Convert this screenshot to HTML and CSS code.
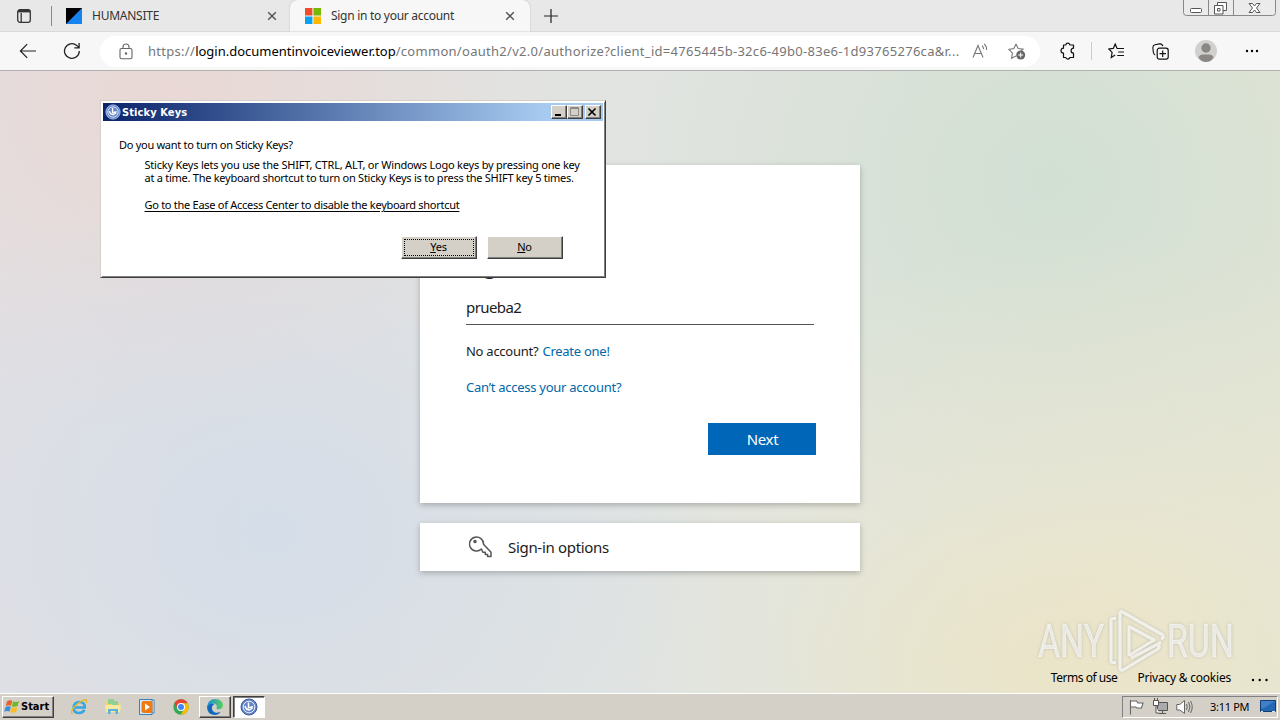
FILE: index.html
```html
<!DOCTYPE html>
<html lang="en">
<head>
<meta charset="utf-8">
<title>Desktop</title>
<link rel="stylesheet" href="styles.css">
</head>
<body>
<div class="desktop">
  <header class="tabstrip">
    <svg class="tab-actions" width="16" height="16" viewBox="0 0 16 16" fill="none" stroke="#333" stroke-width="1.3"><rect x="1.7" y="1.7" width="12.6" height="12.6" rx="2.2"/><path d="M2 3.2h12" stroke-width="2.4"/><path d="M5.2 5v9"/></svg>
    <span class="strip-rule"></span>
    <div class="tab">
      <svg width="16" height="16" viewBox="0 0 16 16"><path fill="#1683f0" d="M0 0h16v16H0z"/><path d="M0 0h16L0 16z"/></svg>
      <span class="tab-title t-human">HUMANSITE</span>
      <svg class="tab-x" width="10" height="10" viewBox="0 0 10 10"><path d="M1.2 1.2l7.6 7.6M8.8 1.2L1.2 8.8"/></svg>
    </div>
    <div class="tab active">
      <svg width="16" height="16" viewBox="0 0 16 16"><path fill="#f04e2b" d="M0 0h7.4v7.4H0z"/><path fill="#76b900" d="M8.4 0H16v7.4H8.4z"/><path fill="#09a2ee" d="M0 8.4h7.4V16H0z"/><path fill="#ffb700" d="M8.4 8.4H16V16H8.4z"/></svg>
      <span class="tab-title t-sign">Sign in to your account</span>
      <svg class="tab-x" width="10" height="10" viewBox="0 0 10 10"><path d="M1.2 1.2l7.6 7.6M8.8 1.2L1.2 8.8"/></svg>
    </div>
    <svg class="new-tab" width="14" height="14" viewBox="0 0 14 14"><path d="M7 0v14M0 7h14" stroke="#222" stroke-width="1.2"/></svg>
    <svg class="win-controls" width="94" height="18" viewBox="0 0 94 18" fill="none" stroke="#888">
      <path fill="#ebebeb" d="M.5-1v14.500q0 3 3 3h86q3 0 3-3V-1"/><path d="M25.500 0v16M50.500 0v16"/>
      <g stroke="#555"><rect x="7.500" y="9.500" width="11" height="4" rx="1" fill="#fff"/><path fill="#fff" d="M34.500 3.500h9v8h-9z"/><path fill="#fff" d="M31.500 6.500h8.500v8.500h-8.500zM34.500 9.500h2.500v2.500h-2.500z"/><path fill="#fff" d="M66 4.500h3.500l2 2.500 2-2.500H77L73.500 9l3.500 4.500h-3.500l-2-2.500-2 2.500H66L69.500 9z"/></g>
    </svg>
  </header>

  <nav class="toolbar">
    <svg class="back" width="18" height="16" viewBox="0 0 18 16"><path d="M17 8H1.500M8.200 1.200L1.400 8l6.800 6.800" fill="none" stroke="#222" stroke-width="1.200"/></svg>
    <svg class="reload" width="18" height="18" viewBox="0 0 18 18"><path d="M16.300 9A7.400 7.400 0 1 1 13.700 3.400L16 5.600M16.100 1v4.800h-4.800" fill="none" stroke="#222" stroke-width="1.300"/></svg>
    <div class="address">
      <svg class="lock" width="14" height="17" viewBox="0 0 14 17" fill="none" stroke="#666" stroke-width="1.100"><rect x="1" y="5.500" width="12" height="10.300" rx="1.500"/><path d="M4 5.500V4a3 3 0 0 1 6 0v1.500"/><circle cx="7" cy="10.500" r=".7" fill="#666"/></svg>
      <span class="url">https://<b>login.documentinvoiceviewer.top</b>/common/oauth2/v2.0/authorize?client_id=4765445b-32c6-49b0-83e6-1d93765276ca&amp;r...</span>
      <svg class="read" width="17" height="16" viewBox="0 0 17 16" fill="none" stroke="#777" stroke-width="1.100"><path d="M1 14.500L6 2.500l5 12M2.700 10.500h6.600M10 2.800q1.700 1.200 1.600 3.500M12 1q3 2 2.500 6"/></svg>
      <svg class="fav" width="18" height="17" viewBox="0 0 18 17"><path d="M8 1l2.100 4.500 5 .7-3.600 3.500M8 12.900l-4.400 2.300.8-5L.9 6.400l5-.8L8 1" fill="none" stroke="#777" stroke-width="1.100"/><circle cx="12.700" cy="12" r="4.500" fill="#666"/><path d="M12.700 9.500v5M10.200 12h5" stroke="#fff"/></svg>
    </div>
    <svg class="ext" width="16" height="18" viewBox="0 0 16 18"><path d="M3.500 3h2.300q.3-1.900 2-1.900T9.900 3h3.600v3.200q-2.400.3-2.400 2.500t2.400 2.500v4.300H9.900q-.4 1.600-2.100 1.600t-2-1.600H3.500v-4.300Q1 10.900 1 8.700t2.500-2.500z" fill="none" stroke="#111" stroke-width="1.200" stroke-linejoin="round"/></svg>
    <span class="tool-rule"></span>
    <svg class="favs" width="17" height="16" viewBox="0 0 17 16"><path d="M9 5.500L7.200 1 5.300 5.400.8 6l3.300 3.400-.8 5.100L7.200 12M9 5.500h7M10.200 9H16M9.200 12.500H16" fill="none" stroke="#111" stroke-width="1.200"/></svg>
    <svg class="coll" width="17" height="17" viewBox="0 0 17 17"><path d="M3.200 12C1.500 11.500 1.400 10.200 1.200 8.500L.9 5Q.7 2.300 3 1.800L7.500.9Q10.200.6 10.800 3.200" fill="none" stroke="#111" stroke-width="1.100"/><rect x="5.200" y="5.200" width="11" height="11" rx="2.200" fill="#fafafa" stroke="#111" stroke-width="1.200"/><path d="M10.700 7.500v6.500M7.500 10.700H14" stroke="#111" stroke-width="1.200"/></svg>
    <svg class="avatar" width="22" height="22" viewBox="0 0 22 22"><circle cx="11" cy="11" r="11" fill="#d2d0ce"/><circle cx="11" cy="8" r="4.700" fill="#8a8683"/><path d="M3.500 17.500q1-3 4.500-3h6q3.500 0 4.500 3-3 4.500-7.500 4.500t-7.500-4.500" fill="#8a8683"/></svg>
    <svg class="more" width="14" height="4" viewBox="0 0 14 4"><circle cx="2" cy="2" r="1.200"/><circle cx="7" cy="2" r="1.200"/><circle cx="12" cy="2" r="1.200"/></svg>
  </nav>

  <main class="page">
    <section class="card signin">
      <h1>Sign in</h1>
      <div class="field"><span class="t-user">prueba2</span></div>
      <p class="create"><span class="t-no">No account?</span> <a class="t-create">Create one!</a></p>
      <p class="cant"><a class="t-cant">Can’t access your account?</a></p>
      <div class="actions"><span class="next">Next</span></div>
    </section>
    <section class="card options">
      <svg width="24" height="24" viewBox="0 0 24 24" fill="none" stroke="#555" stroke-width="1.500"><path d="M12.400 14A7 7 0 1 1 14.500 9.300L22 17.300V21.500H18.600V19.500H16.300V17.200H13.800L12.400 14z" stroke-linejoin="round"/><circle cx="6" cy="6.500" r="1" fill="#555"/></svg>
      <span class="t-opt">Sign-in options</span>
    </section>
    <footer class="legal"><span class="t-terms">Terms of use</span><span class="t-priv">Privacy &amp; cookies</span><svg width="18" height="4" viewBox="0 0 18 4"><circle cx="2" cy="2" r="1.200"/><circle cx="8.700" cy="2" r="1.200"/><circle cx="15.500" cy="2" r="1.200"/></svg></footer>
    <div class="watermark">
      <span class="wm-text">ANY</span>
      <svg width="58" height="64" viewBox="0 0 58 64" fill="none" stroke="#fff" stroke-opacity=".72" stroke-width="3.200" stroke-linejoin="round"><path d="M8 53.500H4.500Q3 53.500 3 51V12Q3 9.500 5 9.500H8"/><path d="M23 49L53 33.500M12 56V4.500Q12 2 14.500 3L54 25.500Q57 28 53 30M21 47V17.500L46 31 21 46.500M12 54V59Q12 62 15 61L49 40.500Q54 37 48 36"/></svg>
      <span class="wm-text wm-run">RUN</span>
    </div>
  </main>

  <footer class="taskbar">
    <div class="start">
      <svg width="16" height="15" viewBox="0 0 16 15"><path fill="#e8602c" d="M3 2.500Q5.500.5 8.200 1.800L7 6.800Q4.500 5.700 1.800 7z"/><path fill="#74b72e" d="M9 2.200q3 1.500 6-.3l-1.300 5q-3 1.500-5.900.3z"/><path fill="#3b8ede" d="M1.500 8q2.700-1.500 5.300-.3L5.500 12.600Q3 11.500.2 12.800z"/><path fill="#fabd22" d="M7.600 8q3 1.400 5.900-.2l-1.300 5q-3 1.700-5.900.2z"/></svg>
      <span class="t-start">Start</span>
    </div>
    <div class="launch">
      <svg width="18" height="18" viewBox="0 0 18 18" fill="none"><path d="M4.500 9.500h10.300q0-5.500-5.400-5.500T3.700 9.700q0 5.300 5.500 5.300 3.800 0 5.100-3.300" stroke="#35a7e2" stroke-width="2.600"/><path d="M2.500 16Q-.2 14 5 8.300 12 1.500 15.800 1.800q1.600.4.300 3.300" stroke="#e6b82e" stroke-width="1.400"/></svg>
      <svg width="18" height="18" viewBox="0 0 18 18"><path d="M2 3h5l1 2h7v9H2z" fill="#efd36e"/><path d="M4 1h6v5H4zM8 3h6v5H8z" fill="#8fd093"/><path d="M1 7h16l-1 7H2z" fill="#f8e9a1"/><path d="M4 16v-5h10v5h-2.500v-3h-5v3z" fill="#59b1dc"/></svg>
      <svg width="18" height="18" viewBox="0 0 18 18"><path d="M4 2h12v13H4z" fill="#fff" stroke="#3680bd"/><path d="M1.500 1.500h12.500v15H1.500z" fill="#d5eafa" stroke="#3680bd"/><rect x="3.500" y="3" width="11" height="12" rx="2" fill="#ed7a14"/><path d="M7 5.500l5 3.500-5 3.500z" fill="#fff"/></svg>
      <svg width="18" height="18" viewBox="0 0 18 18"><circle cx="9" cy="9" r="7.700" fill="#34a853"/><path d="M2.300 5.200A7.700 7.700 0 0 1 15.700 5.200H9L5.700 11z" fill="#ea4335"/><path d="M9 5.200h6.700A7.700 7.700 0 0 1 8.500 16.700L12.300 11z" fill="#fbbc05"/><circle cx="9" cy="9" r="4" fill="#fff"/><circle cx="9" cy="9" r="3" fill="#4285f4"/></svg>
    </div>
    <div class="task edge">
      <svg width="18" height="18" viewBox="0 0 18 18"><defs><linearGradient id="eg" x2="1"><stop stop-color="#158fe0"/><stop offset="1" stop-color="#5ccf58"/></linearGradient></defs><path d="M1 8.500Q2.300 1 9.200 1 17 1.500 17 7.500q-.4 3.800-4.500 3.900-2.500 0-2-1.400Q12 7 8 5.500 4 4.900 1 8.500z" fill="url(#eg)"/><path d="M1 8.500Q4.500 4 8.500 6 4.500 8.500 6.500 12.500q2.500 4 8 1.200-2 3.300-6 3.300Q1 16.500 1 8.500z" fill="#1067bd"/></svg>
    </div>
    <div class="task pressed">
      <svg width="18" height="18" viewBox="0 0 18 18"><circle cx="9" cy="9" r="8" fill="#6486c9" stroke="#3b5999"/><circle cx="9" cy="9" r="5.800" fill="none" stroke="#e4edff"/><path d="M8.500 4.500v5.200l4.500-1M5 8q1 4 4.500 4l3-2" fill="none" stroke="#fff" stroke-width="1.500"/></svg>
    </div>
    <div class="tray">
      <svg width="17" height="16" viewBox="0 0 17 16"><path d="M2.500 1v14.500M2.500 2h6l1.500 2h5l-1.500 5H9L7.500 8h-5" fill="#fff" stroke="#666" stroke-width="1.100"/></svg>
      <svg width="17" height="17" viewBox="0 0 17 17" stroke="#555"><path d="M5.500 4.500h10v8h-10zM7 15.500h7M10.500 13v2" fill="#aaa"/><path d="M1.500 2.500h5v5h-5zM2.500 0v2M5.500 0v2M4 8v7h3" fill="#fff"/></svg>
      <svg width="17" height="16" viewBox="0 0 17 16" stroke="#666" fill="none"><path d="M.8 5.500h3L8.500 1.500v13L3.800 11h-3z" fill="#fff"/><path d="M10.500 5q1.500 3 0 6M12.500 3q3 5 0 10M14.500 2q3.500 6 0 12"/></svg>
      <span class="t-clock">3:11 PM</span>
      <svg class="show" width="16" height="13" viewBox="0 0 16 13"><path d="M.5.500h15v11H.500z" fill="#2467b2" stroke="#143d75"/><path d="M1 1h14L4 8H1z" fill="#3f80c8"/><path d="M1 11.500h2M12 11.500h3" stroke="#dce6ef"/></svg>
    </div>
  </footer>

  <section class="dialog">
    <div class="titlebar">
      <svg width="16" height="16" viewBox="0 0 18 18"><circle cx="9" cy="9" r="8" fill="#6486c9" stroke="#b9c9ed"/><circle cx="9" cy="9" r="5.800" fill="none" stroke="#e4edff"/><path d="M8.500 4.500v5.200l4.500-1M5 8q1 4 4.500 4l3-2" fill="none" stroke="#fff" stroke-width="1.500"/></svg>
      <span class="dialog-title">Sticky Keys</span>
      <span class="cap"><svg width="12" height="10"><path d="M3 8h6" stroke="#000" stroke-width="2"/></svg></span>
      <span class="cap"><svg width="12" height="10"><path d="M2.500.500h8v8h-8zM2.500 1.500h8" fill="none" stroke="#8b8883"/></svg></span>
      <span class="cap close"><svg width="12" height="10"><path d="M2.500 1.500l7 7M9.500 1.500l-7 7" stroke="#000" stroke-width="1.600"/></svg></span>
    </div>
    <div class="dialog-body">
      <p class="question"><span class="t-q">Do you want to turn on Sticky Keys?</span></p>
      <p class="detail"><span class="t-d1">Sticky Keys lets you use the SHIFT, CTRL, ALT, or Windows Logo keys by pressing one key</span><br><span class="t-d2">at a time. The keyboard shortcut to turn on Sticky Keys is to press the SHIFT key 5 times.</span></p>
      <p class="ease"><span class="t-ease">Go to the Ease of Access Center to disable the keyboard shortcut</span></p>
      <div class="buttons"><span class="btn"><i class="focus"><span><u>Y</u>es</span></i></span><span class="btn"><span><u>N</u>o</span></span></div>
    </div>
  </section>
</div>
</body>
</html>
```
FILE: styles.css
```css
* { box-sizing: border-box; }
body { margin: 0; }
svg { display: block; flex: none; }
p, h1 { margin: 0; }
.desktop { position: relative; width: 1280px; height: 720px; overflow: hidden; display: flex; flex-direction: column; font-family: "Noto Sans", "Open Sans", sans-serif; white-space: nowrap; color: #1b1b1b; }

.tabstrip { height: 32px; background: #e8e8e8; display: flex; align-items: center; border-bottom: 1px solid #dadada; flex: none; }
.tab-actions { margin-left: 16px; }
.strip-rule { width: 1px; height: 20px; background: #888; margin: 0 0 0 19px; }
.tab { display: flex; align-items: center; width: 238px; height: 32px; padding: 0 13px 0 14px; }
.tab-title { font-size: 12px; color: #333; margin-left: 10px; flex: 1; }
.t-human { letter-spacing: -.25px; }
.t-sign { letter-spacing: -.28px; }
.tab-x { stroke: #555; stroke-width: 1.5; }
.tab.active { width: 240px; background: #f7f7f7; border-radius: 8px 8px 0 0; padding: 0 15px; box-shadow: 0 0 2px #bbb; clip-path: inset(-2px -2px 0 -2px); }
.new-tab { margin-left: 14px; }
.win-controls { position: absolute; left: 1183px; top: -1px; }

.toolbar { height: 39px; background: #f7f7f7; border-bottom: 1px solid #b0b0b0; display: flex; align-items: center; flex: none; }
.back { margin-left: 19px; }
.reload { margin-left: 26px; }
.address { width: 940px; height: 31px; border-radius: 16px; background: #fff; margin-left: 19px; display: flex; align-items: center; padding-left: 19px; }
.url { font-size: 13px; letter-spacing: .29px; margin-left: 15px; color: #767676; width: 812px; }
.url b { font-weight: 400; color: #000; letter-spacing: -.01px; }
.read { margin-left: 12px; }
.fav { margin-left: 19px; }
.ext { margin-left: 20px; }
.tool-rule { width: 1px; height: 18px; background: #ccc; margin-left: 15px; }
.favs { margin-left: 16px; }
.coll { margin-left: 27px; }
.avatar { margin-left: 26px; }
.more { margin-left: 28px; }

.page { position: relative; height: 622px; flex: none; display: flex; flex-direction: column; align-items: center; padding-top: 94px;
  background:
    radial-gradient(ellipse 300px 180px at 1060px 600px, #ece4bf90, #ece4bf00),
    radial-gradient(ellipse 500px 380px at 1120px 540px, #ebe6cfcc, #ebe6cf00),
    radial-gradient(ellipse 460px 360px at 270px 460px, #d2dceacc, #d2dcea00),
    radial-gradient(ellipse 380px 340px at 170px 20px, #ead7d3e6, #ead7d300),
    radial-gradient(ellipse 420px 380px at 1050px 110px, #d0dfd3e6, #d0dfd300),
    linear-gradient(90deg, #e2e0e3, #e1e4e1 50%, #e3e5d6); }
.card { width: 440px; background: #fff; box-shadow: 0 2px 6px rgba(0,0,0,.25); flex: none; }
.signin { height: 338px; padding: 80px 44px 0 46px; }
.signin h1 { font-size: 23px; font-weight: 600; line-height: 39px; letter-spacing: -1px; }
.field { width: 348px; height: 34px; border-bottom: 1px solid #555; margin-top: 7px; font-size: 15px; line-height: 32px; }
.t-user { letter-spacing: -.58px; }
.create, .cant { font-size: 13px; line-height: 20px; letter-spacing: -.26px; }
.create { margin-top: 16px; }
.t-create { margin-left: 1px; }
.cant { margin-top: 16px; }
.card a { color: #0067a8; }
.actions { display: flex; justify-content: flex-end; margin-top: 26px; }
.next { width: 108px; height: 32px; background: #0067b8; color: #fff; font-size: 15px; letter-spacing: -.3px; line-height: 32px; text-align: center; padding-left: 1px; }
.options { height: 48px; margin-top: 20px; display: flex; align-items: center; padding-left: 49px; gap: 15px; font-size: 15px; letter-spacing: -.31px; }
.legal { margin-top: auto; height: 31px; align-self: flex-end; display: flex; align-items: center; font-size: 12px; color: #000; padding-right: 11px; }
.t-terms { letter-spacing: -.46px; }
.t-priv { margin-left: 20px; letter-spacing: -.22px; }
.legal svg { margin-left: 20px; margin-top: 4px; }
.watermark { position: absolute; left: 1038px; top: 538px; display: flex; align-items: center; filter: drop-shadow(0 0 1.5px #7778); }
.watermark svg { margin-left: 3px; }
.wm-text { display: block; font-family: "Roboto", sans-serif; font-size: 47px; line-height: 64px; color: #ffffffa0; transform-origin: 0 50%; transform: scaleX(.72); width: 67px; -webkit-text-stroke: .6px #ffffffa0; }
.wm-run { margin-left: 1px; }

.taskbar { height: 27px; background: #d4d0c8; border-top: 1px solid #fff; display: flex; align-items: center; padding: 0 2px 1px; flex: none; font-family: "DejaVu Sans Condensed", "DejaVu Sans", sans-serif; color: #000; }
.start { width: 52px; height: 22px; display: flex; align-items: center; gap: 1px; padding-left: 1px; font-size: 11px; font-weight: 700; border: 1px solid; border-color: #fff #404040 #404040 #fff; box-shadow: inset -1px -1px #808080; }
.launch { display: flex; gap: 16px; margin-left: 16px; }
.task { width: 32px; height: 22px; display: grid; place-items: center; border: 1px solid; border-color: #fff #404040 #404040 #fff; box-shadow: inset -1px -1px #808080; }
.edge { margin-left: 9px; }
.pressed { margin-left: 2px; background: #fff; border-color: #404040 #fff #fff #404040; box-shadow: inset 1px 1px #808080; }
.tray { margin-left: auto; width: 156px; height: 22px; display: flex; align-items: center; border: 1px solid; border-color: #808080 #fff #fff #808080; padding-left: 5px; gap: 7px; font-size: 11px; }
.t-clock { margin-left: 10px; font-family: "Noto Sans", sans-serif; letter-spacing: -.3px; }
.show { margin-left: auto; margin-right: 1px; }

.dialog { position: absolute; left: 100px; top: 100px; width: 506px; height: 178px; background: #fff; border: 1px solid; border-color: #d4d0c8 #404040 #404040 #d4d0c8; box-shadow: inset 1px 1px #fff, inset -1px -1px #808080; padding: 2px; color: #000; font-family: "Noto Sans", sans-serif; }
.titlebar { height: 18px; background: linear-gradient(90deg, #0a246a, #a6caf0 88%); display: flex; align-items: center; padding: 0 2px; }
.dialog-title { font-family: "DejaVu Sans Condensed", sans-serif; color: #fff; font-size: 11px; font-weight: 700; flex: 1; margin-left: 1px; letter-spacing: .1px; }
.cap { width: 16px; height: 14px; background: #d4d0c8; border: 1px solid; border-color: #fff #404040 #404040 #fff; box-shadow: inset -1px -1px #808080; padding-top: 1px; }
.close { margin-left: 2px; }
.dialog-body { padding: 17px 40px 0 16px; font-size: 11px; line-height: 13px; }
.t-q { letter-spacing: -.28px; }
.t-d1 { letter-spacing: -.21px; }
.t-d2 { letter-spacing: -.26px; }
.detail { margin: 7px 0 0 25.500px; }
.ease { margin: 14px 0 0 25.500px; }
.t-ease { letter-spacing: -.28px; text-decoration: underline; text-underline-offset: 2px; }
.buttons { display: flex; justify-content: flex-end; gap: 10px; margin-top: 25px; line-height: 12px; letter-spacing: -.2px; }
.btn { width: 76px; height: 23px; background: #d4d0c8; border: 1px solid; border-color: #fff #404040 #404040 #fff; box-shadow: inset -1px -1px #808080; padding: 0 2px 1px 1px; display: grid; place-items: center; }
.focus { width: 70px; height: 17px; border: 1px dotted #000; display: grid; place-items: center; font-style: normal; }
```
